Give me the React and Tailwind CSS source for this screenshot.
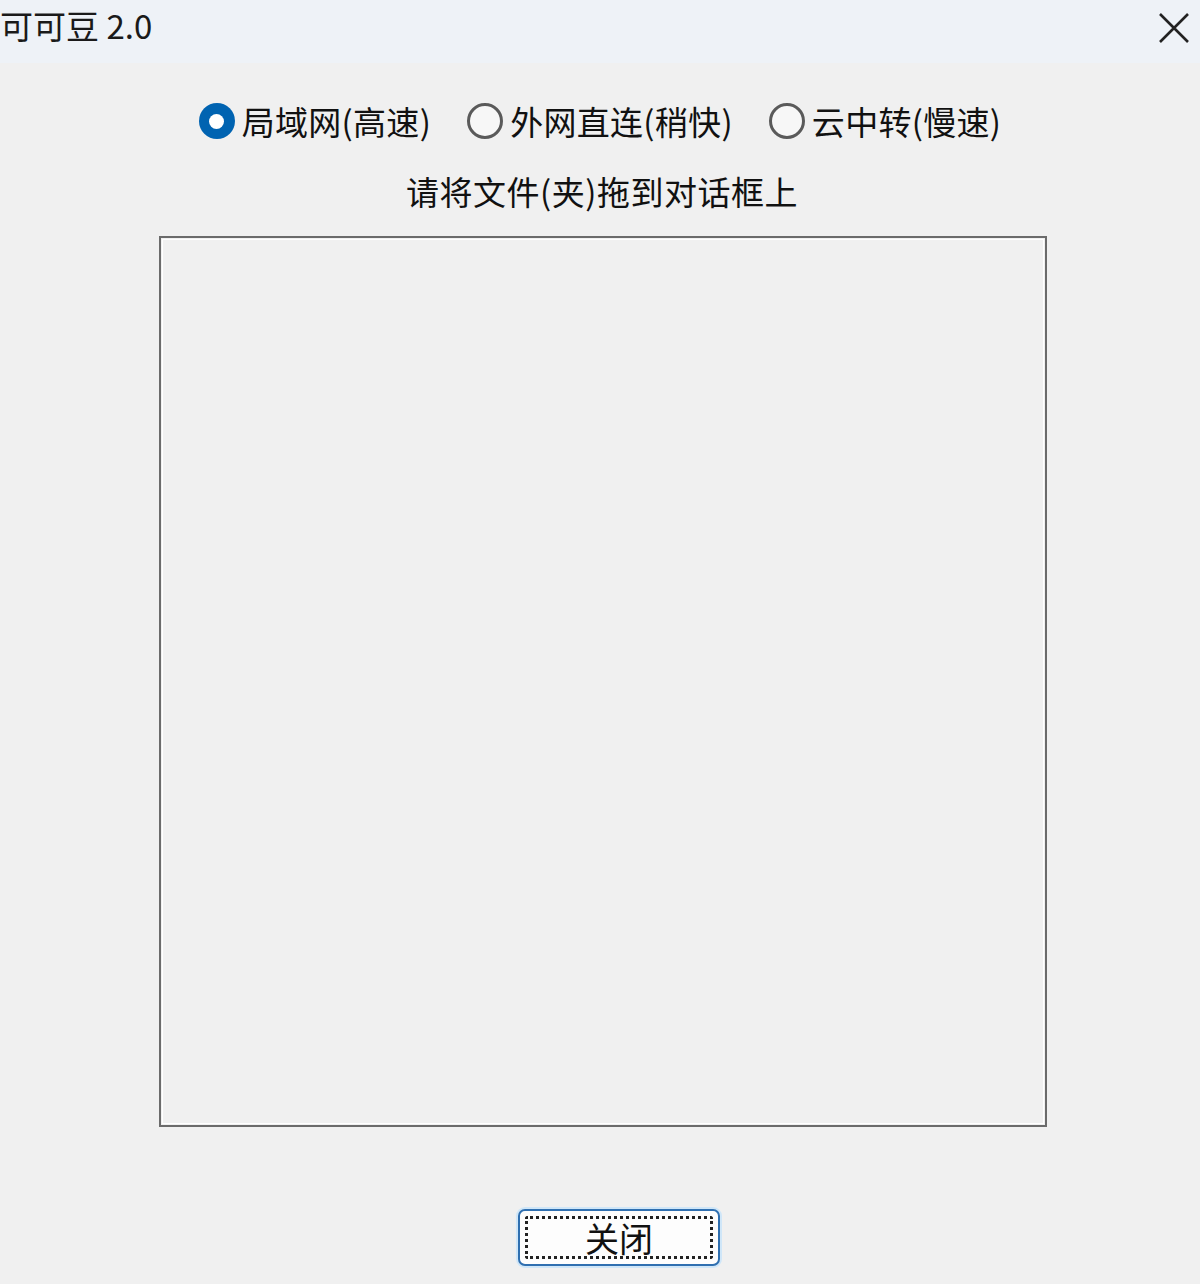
import React from "react";

const font = { fontFamily: '"Noto Sans CJK SC", "Noto Sans", sans-serif' };

function Radio({ checked, label }) {
  return (
    <div className="flex items-center gap-[7px]">
      {checked ? (
        <span className="w-[36px] h-[36px] rounded-full bg-[#0063b1] flex items-center justify-center">
          <span className="w-[15px] h-[15px] rounded-full bg-white" />
        </span>
      ) : (
        <span className="w-[36px] h-[36px] rounded-full border-[3px] border-[#5a5a5a] bg-[#f7f7f7]" />
      )}
      <span className="text-[33px] leading-[40px] text-[#111] tracking-[0.3px]">{label}</span>
    </div>
  );
}

export default function App() {
  return (
    <div className="w-[1200px] h-[1284px] bg-[#f0f0f0] flex flex-col" style={font}>
      <div className="h-[63px] bg-[#eef2f7] flex items-center justify-between shrink-0">
        <span className="text-[33px] leading-[40px] text-[#1a1a1a] -mt-[14px]">可可豆 2.0</span>
        <svg width="34" height="34" viewBox="0 0 34 34" className="mr-[9px] -mt-[8px]">
          <path d="M3 3 L31 31 M31 3 L3 31" stroke="#222" strokeWidth="2.6" />
        </svg>
      </div>
      <div className="flex justify-center gap-[36px] pt-[38px]">
        <Radio checked label="局域网(高速)" />
        <Radio label="外网直连(稍快)" />
        <Radio label="云中转(慢速)" />
      </div>
      <div className="text-center text-[33px] leading-[40px] text-[#111] mt-[30px] pl-[4px] tracking-[0.5px]">
        请将文件(夹)拖到对话框上
      </div>
      <div className="mt-[25px] ml-[159px] w-[888px] h-[891px] border-2 border-[#6b6b6b] p-[1px]">
        <div className="w-full h-full border border-white" />
      </div>
      <div className="flex mt-[82px] ml-[518px]">
        <button className="w-[202px] h-[57px] rounded-[7px] border-2 border-[#2f6fb0] bg-[#fdfdfd] shadow-[0_0_0_2px_#cfe6f8] p-[5px]">
          <div className="w-full h-full border-[3px] border-dotted border-[#222] rounded-[3px] flex items-center justify-center">
            <span className="text-[34px] leading-[36px] text-[#111]">关闭</span>
          </div>
        </button>
      </div>
    </div>
  );
}
